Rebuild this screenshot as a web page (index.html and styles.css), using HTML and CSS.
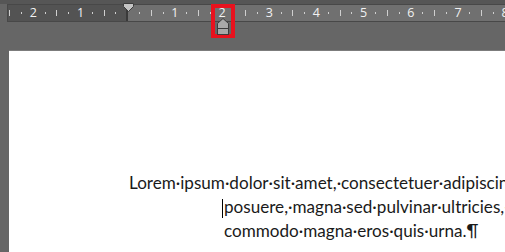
FILE: index.html
```html
<!DOCTYPE html>
<html lang="en">
<head>
    <meta charset="UTF-8">
    <title>Ruler indent</title>
    <link rel="stylesheet" href="styles.css">
</head>
<body>
    <div class="window">
        <div class="ruler-bar">
            <div class="ruler">
                <div class="ticks">
                    <span class="cell"><i class="tick"></i></span>
                    <span class="cell"><i class="dot"></i></span>
                    <span class="cell num">2</span>
                    <span class="cell"><i class="dot"></i></span>
                    <span class="cell"><i class="tick"></i></span>
                    <span class="cell"><i class="dot"></i></span>
                    <span class="cell num">1</span>
                    <span class="cell"><i class="dot"></i></span>
                    <span class="cell"><i class="tick"></i></span>
                    <span class="cell"><i class="dot"></i></span>
                    <span class="cell"></span>
                    <span class="cell"><i class="dot"></i></span>
                    <span class="cell"><i class="tick"></i></span>
                    <span class="cell"><i class="dot"></i></span>
                    <span class="cell num">1</span>
                    <span class="cell"><i class="dot"></i></span>
                    <span class="cell"><i class="tick"></i></span>
                    <span class="cell"><i class="dot"></i></span>
                    <span class="cell num">2</span>
                    <span class="cell"><i class="dot"></i></span>
                    <span class="cell"><i class="tick"></i></span>
                    <span class="cell"><i class="dot"></i></span>
                    <span class="cell num">3</span>
                    <span class="cell"><i class="dot"></i></span>
                    <span class="cell"><i class="tick"></i></span>
                    <span class="cell"><i class="dot"></i></span>
                    <span class="cell num">4</span>
                    <span class="cell"><i class="dot"></i></span>
                    <span class="cell"><i class="tick"></i></span>
                    <span class="cell"><i class="dot"></i></span>
                    <span class="cell num">5</span>
                    <span class="cell"><i class="dot"></i></span>
                    <span class="cell"><i class="tick"></i></span>
                    <span class="cell"><i class="dot"></i></span>
                    <span class="cell num">6</span>
                    <span class="cell"><i class="dot"></i></span>
                    <span class="cell"><i class="tick"></i></span>
                    <span class="cell"><i class="dot"></i></span>
                    <span class="cell num">7</span>
                    <span class="cell"><i class="dot"></i></span>
                    <span class="cell"><i class="tick"></i></span>
                    <span class="cell"><i class="dot"></i></span>
                    <span class="cell num">8</span>
                </div>

                <!-- first line indent marker -->
                <svg class="first-indent" width="11" height="9" viewBox="0 0 11 9">
                    <path d="M0.5 0.5 H10.5 V3.5 L5.5 8.5 L0.5 3.5 Z" fill="#c4c4c4" stroke="#3c3c3c"/>
                </svg>

                <!-- hanging indent marker, highlighted -->
                <div class="highlight">
                    <svg class="hanging-indent" width="12" height="18" viewBox="0 0 12 18">
                        <path d="M0.5 5.5 L6 0.5 L11.5 5.5 V10.5 H0.5 Z" fill="#a8a8a8" stroke="#3c3c3c"/>
                        <rect x="0.5" y="10.5" width="11" height="6" fill="#a8a8a8" stroke="#3c3c3c"/>
                    </svg>
                </div>
            </div>
        </div>

        <div class="page">
            <p class="para">
                <span class="line first">Lorem·ipsum·dolor·sit·amet,·consectetuer·adipiscing·elit.·Maecenas·porttitor·congue·massa.·Fusce·</span>
                <span class="line"><span class="caret"></span>posuere,·magna·sed·pulvinar·ultricies,·purus·lectus·malesuada·libero,·sit·amet·</span>
                <span class="line">commodo·magna·eros·quis·urna.¶</span>
            </p>
        </div>
    </div>
</body>
</html>
```

FILE: styles.css
```css
html, body {
    margin: 0;
    padding: 0;
    overflow: hidden;
}
body {
    background-color: #666666;
    font-family: Lato, "Open Sans", sans-serif;
    width: 505px;
    height: 252px;
}
.window {
    width: 505px;
    height: 252px;
    overflow: hidden;
}
.ruler-bar {
    padding-top: 4px;
    background: linear-gradient(#565656 0, #565656 4px, #666666 4px);
    height: 47px;
}
.ruler {
    position: relative;
    margin-left: 7px;
    width: 520px;
    height: 16px;
    border: 1px solid #484848;
    background: linear-gradient(90deg, #535353 0, #535353 118px, #3a3a3a 118px, #3a3a3a 120px, #707070 120px);
}
.ticks {
    display: flex;
    margin-left: -4.2px;
    height: 16px;
}
.cell {
    flex: 0 0 11.8px;
    display: flex;
    align-items: center;
    justify-content: center;
    height: 16px;
    color: #f2f2f2;
    font-family: "Open Sans", "Noto Sans", sans-serif;
    font-size: 12.5px;
    line-height: 16px;
}
.tick {
    display: block;
    width: 1px;
    height: 6px;
    background-color: #cfcfcf;
}
.dot {
    display: block;
    width: 1px;
    height: 2px;
    background-color: #cfcfcf;
}
.first-indent {
    position: absolute;
    left: 115px;
    top: -2px;
}
.highlight {
    position: absolute;
    left: 203px;
    top: -1px;
    width: 16px;
    height: 26px;
    border: 4px solid #e8121e;
}
.hanging-indent {
    position: absolute;
    left: 2px;
    top: 10px;
}
.page {
    margin-left: 9px;
    width: 560px;
    height: 201px;
    background-color: #ffffff;
    box-shadow: 0 -1px 0 #7c7c7c;
}
.para {
    margin: 0;
    padding-top: 120px;
    color: #1a1a1a;
    font-size: 17.1px;
    line-height: 24px;
}
.line {
    display: block;
    white-space: nowrap;
    padding-left: 215px;
}
.line.first {
    padding-left: 120px;
}
.caret {
    display: inline-block;
    width: 1px;
    height: 19px;
    margin-left: -2px;
    margin-right: 1px;
    vertical-align: -5px;
    background-color: #000000;
}
```
